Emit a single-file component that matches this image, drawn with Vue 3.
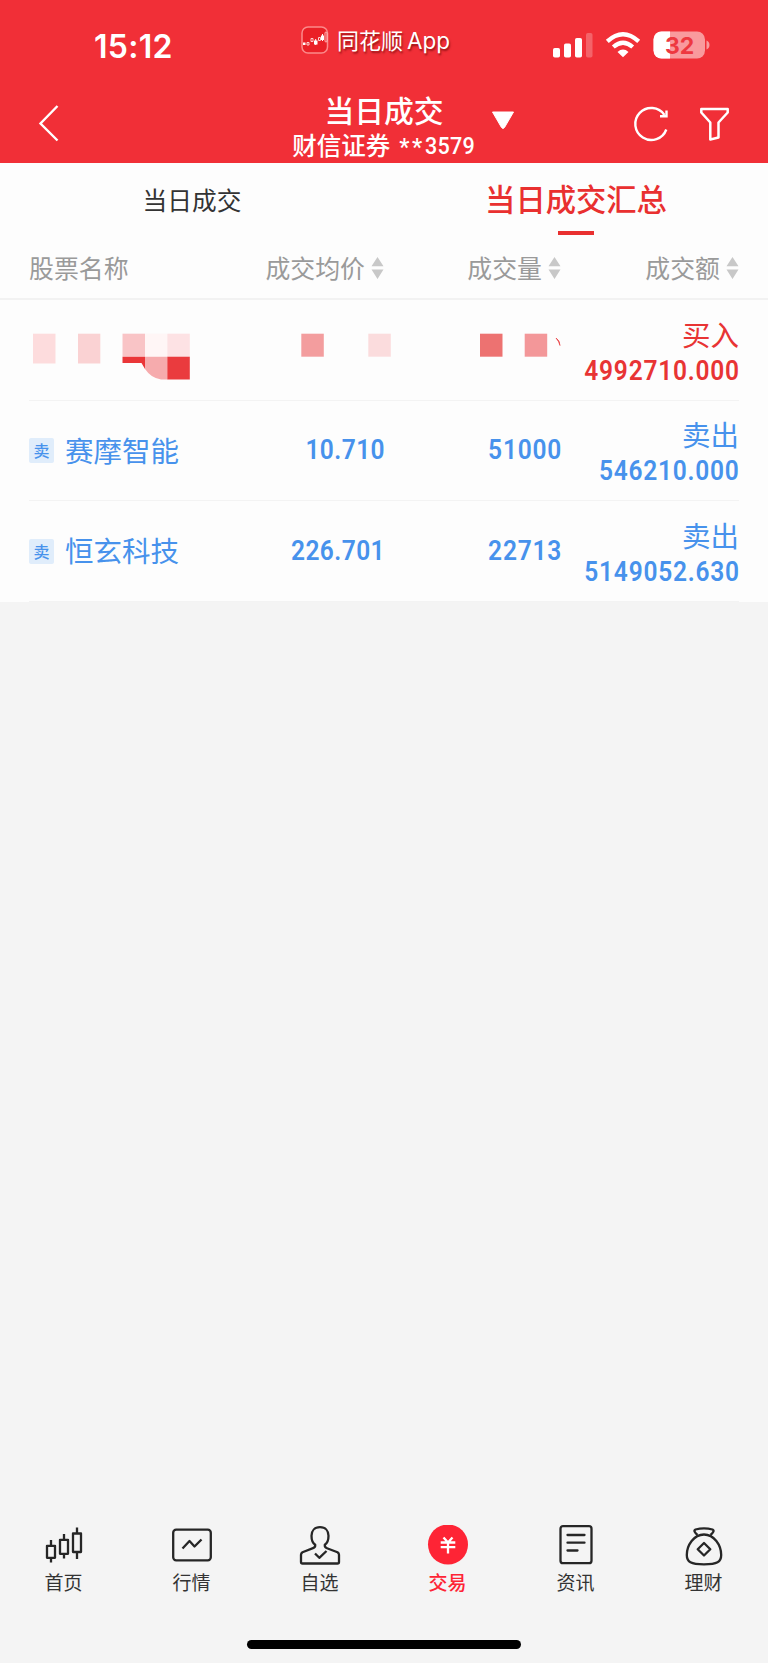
<script setup>
const columns = [
  { label: '股票名称', sortable: false },
  { label: '成交均价', sortable: true },
  { label: '成交量', sortable: true },
  { label: '成交额', sortable: true },
]
const rows = [
  { masked: true, side: 'buy', type: '买入', amount: '4992710.000' },
  { side: 'sell', tag: '卖', name: '赛摩智能', price: '10.710', volume: '51000', type: '卖出', amount: '546210.000' },
  { side: 'sell', tag: '卖', name: '恒玄科技', price: '226.701', volume: '22713', type: '卖出', amount: '5149052.630' },
]
const nav = [
  { id: 'home', label: '首页' },
  { id: 'market', label: '行情' },
  { id: 'watch', label: '自选' },
  { id: 'trade', label: '交易' },
  { id: 'news', label: '资讯' },
  { id: 'wealth', label: '理财' },
]
</script>

<template>
  <div class="screen">
    <header class="top">
      <div class="status">
        <span class="clock">15:12</span>
        <div class="brand">
          <svg class="brand-icon" width="28" height="28" viewBox="0 0 28 28">
            <rect x="1" y="1" width="25.500" height="26" rx="6" fill="#ea2027" stroke="#fb8a8b" stroke-width="1.500" />
            <path d="M6 16.500h2v2.500H6zM10 12.500h2v3h-2zM17.500 11.500h2v3h-2z" stroke="#fbd0d0" stroke-width="1" fill="none" />
            <path d="M2 16.500h2.500v2.500H2zM13 14.500h3.500v4H13zM20 9.500h3v4.500h-3z" fill="#fff" />
            <path d="M14.700 13v6M21.500 8v7" stroke="#fff" stroke-width="1" />
            <rect x="24" y="6" width="2" height="10" rx="1" fill="none" stroke="#fbb" stroke-width="1" />
          </svg>
          <span class="brand-name">同花顺<i class="latin">App</i></span>
        </div>
        <svg class="signals" width="160" height="30" viewBox="0 0 160 30">
          <g fill="#fff">
            <rect x="1" y="17" width="7" height="9.500" rx="1.800" />
            <rect x="12" y="12.500" width="7" height="14" rx="1.800" />
            <rect x="23" y="7" width="7" height="19.500" rx="1.800" />
            <rect x="34" y="2" width="6.500" height="24.500" rx="1.800" opacity=".25" />
          </g>
          <g transform="translate(54 1)" fill="none" stroke="#fff" stroke-width="4.300">
            <path d="M1.300 9.300Q17 -5 32.700 9.300" />
            <path d="M7.300 15Q17 6.500 26.700 15" />
            <path d="M11.500 19.900Q17 15 22.500 19.900L17 25.200Z" fill="#fff" stroke="none" />
          </g>
          <rect x="101.500" y="0.500" width="51.500" height="27" rx="8" fill="#f99a9d" />
          <path d="M118 .5V27.500H109.500a8 8 0 0 1-8-8V8.500a8 8 0 0 1 8-8z" fill="#fff" />
          <path d="M154.500 9.500q3 1.200 3 4.500t-3 4.500z" fill="#f99a9d" />
          <text x="127.700" y="22.500" text-anchor="middle" class="battery">32</text>
        </svg>
      </div>
      <div class="titlebar">
        <svg class="back" width="24" height="40" viewBox="0 0 24 40">
          <path d="M20.500 3L3.500 20.500l17 17" fill="none" stroke="#fff" stroke-width="2.400" />
        </svg>
        <div class="heading">
          <div class="title">当日成交</div>
          <div class="account">财信证券<span class="stars">**</span><span class="digits">3579</span></div>
        </div>
        <svg class="caret" width="24" height="20" viewBox="0 0 24 20">
          <path d="M1.500 2h21L13.500 17.500q-1.500 2-3 0z" fill="#fff" stroke="#fff" stroke-linejoin="round" />
        </svg>
        <svg class="actions" width="100" height="40" viewBox="0 0 100 40">
          <path d="M33.300 25.500A16 16 0 1 1 31.500 11" fill="none" stroke="#fff" stroke-width="2.400" />
          <path d="M33.500 6.500V12.200H27" fill="none" stroke="#fff" stroke-width="2.400" />
          <path d="M68.300 5H94.700V8.500L85.500 18.500V33.500L77.300 35.500V18.500L68.300 8.500Z" fill="none" stroke="#fff" stroke-width="2.500" stroke-linejoin="round" />
        </svg>
      </div>
    </header>

    <main class="sheet">
      <div class="tabs">
        <div class="tab">当日成交</div>
        <div class="tab active"><span>当日成交汇总</span></div>
      </div>
      <div class="grid head">
        <div v-for="c in columns" :key="c.label" class="cell">
          <span>{{ c.label }}</span>
          <svg v-if="c.sortable" class="sort" width="13" height="24" viewBox="0 0 13 24">
            <path d="M6.500 1L12.500 10.200H.5zM.5 13.500h12L6.500 23z" fill="#c8c8c8" />
          </svg>
        </div>
      </div>
      <div v-for="(r, i) in rows" :key="i" class="grid row" :class="r.side">
        <svg v-if="r.masked" class="mask" width="540" height="54" viewBox="29 330 540 54">
          <path d="M33 333.700h22.500V363.500H33z" fill="#fddcdd" />
          <path d="M78 333.700h22.300V363.500H78z" fill="#fad2d3" />
          <path d="M122.500 333.700H145v23h-22.500z" fill="#f9c4c6" />
          <path d="M145 333.700h22.300v23H145z" fill="#fff6f6" />
          <path d="M167.300 333.700h22.500v23h-22.500z" fill="#fde2e4" />
          <path d="M122.500 356.700H145V369L141.500 363H122.500z" fill="#ea3638" />
          <path d="M145 356.700h22.300V379.500H161Q151 378 145 369z" fill="#f6abad" />
          <path d="M167.300 356.700h22.500v22.800h-22.500z" fill="#ea3b3e" />
          <path d="M301.300 333.700h22.500v23h-22.500z" fill="#f39d9e" />
          <path d="M368.300 333.700h22.500v23h-22.500z" fill="#fbdcdd" />
          <path d="M480 333.700h22.500v23H480z" fill="#ed7271" />
          <path d="M524.700 333.700h22.500v23h-22.500z" fill="#f39799" />
          <path d="M556 338Q560 340.500 560 345.500 559 341.500 556 338z" fill="#e8383a" stroke="#e8383a" stroke-width=".6" />
        </svg>
        <template v-else>
          <div class="cell name"><span class="tag">{{ r.tag }}</span><span class="stock">{{ r.name }}</span></div>
          <div class="cell num price">{{ r.price }}</div>
          <div class="cell num">{{ r.volume }}</div>
        </template>
        <div class="cell total">
          <span class="type">{{ r.type }}</span>
          <span class="num">{{ r.amount }}</span>
        </div>
      </div>
    </main>

    <footer class="bottom">
      <nav class="nav">
        <div v-for="n in nav" :key="n.id" class="item" :class="{ on: n.id === 'trade' }">
          <svg width="44" height="44" viewBox="0 0 44 44" fill="none" stroke="#262626" stroke-width="2.300" stroke-linejoin="round">
            <g v-if="n.id === 'home'">
              <path d="M5 20.800h8v12H5zM18 14.800h8v14h-8zM31 8.500h8V27h-8z" />
              <path d="M9 15v6M9 33v4.500M22 9v6M22 29v4.500M35 2.500v6M35 27v7" />
            </g>
            <g v-else-if="n.id === 'market'">
              <rect x="3.200" y="4.700" width="37.600" height="30.600" rx="3" />
              <path d="M12.500 23.500L19.500 16 24.500 21.500 31.500 14.500" />
            </g>
            <g v-else-if="n.id === 'watch'">
              <path d="M22 2.200c-5.500 0-8.500 3.800-8.500 8.500 0 4.500 1 7.300 3.700 9.100.3 2-.6 2.800-2.200 3.400L4.500 27.200Q3 28.200 3 29.700v7.300q0 1.500 1.500 1.500h35q1.500 0 1.500-1.500V29.700q0-1.500-1.500-2.500L29 23.200c-1.600-.6-2.500-1.400-2.200-3.400 2.700-1.800 3.700-4.600 3.700-9.100C30.500 6 27.500 2.200 22 2.200z" />
              <path d="M17 28.500l4.300 4.300L28.500 26" />
            </g>
            <g v-else-if="n.id === 'trade'">
              <circle cx="22" cy="19.500" r="20" fill="#fe2435" stroke="none" />
              <path d="M17.500 12.500l4.500 5 4.500-5M14.700 17.500h14.600M14.700 22.200h14.600M22 17v11.500" stroke="#fff" />
            </g>
            <g v-else-if="n.id === 'news'">
              <rect x="6.500" y="1.200" width="31" height="37" rx="2.500" />
              <path d="M13.500 10h17M13.500 17.700h17M13.500 25.500h10" stroke-linecap="round" />
            </g>
            <g v-else>
              <path d="M15.500 10C12.500 7.500 11.500 5.500 13.500 4.500Q22 2.300 30.500 4.500C32.500 5.500 31.500 7.500 28.500 10" />
              <path d="M22 9.500C12 9.500 4.800 20 4.800 30c0 7 4 9.300 17.200 9.300s17.200-2.300 17.200-9.300C39.200 20 32 9.500 22 9.500z" />
              <path d="M22 18l6.300 6.300L22 30.500l-6.300-6.200z" />
            </g>
          </svg>
          <span>{{ n.label }}</span>
        </div>
      </nav>
      <div class="home-bar"></div>
    </footer>
  </div>
</template>

<style>
body { margin: 0; background: #f4f4f4; }
</style>

<style scoped>
.screen {
  width: 768px;
  height: 1663px;
  display: flex;
  flex-direction: column;
  background: #f4f4f4;
  font-family: "Noto Sans CJK SC", sans-serif;
  overflow: hidden;
}
svg { display: block; flex: none; }
.top { height: 163px; background: #f12f37; color: #fff; flex: none; }
.status { height: 88px; display: flex; align-items: flex-start; }
.clock {
  flex: none;
  width: 205px;
  padding: 28px 0 0 94px;
  font: 600 32px/38px Inter, sans-serif;
  letter-spacing: 0.300px;
}
.brand { display: flex; width: 253px; padding-top: 26px; }
.brand-icon { margin: 0 8px 0 2px; }
.brand-name {
  font-size: 22px;
  line-height: 27px;
  white-space: nowrap;
  text-shadow: 1px 2px 2px rgba(90, 0, 0, .6);
}
.latin { font: normal 22.500px/27px Inter, sans-serif; margin-left: 4px; }
.signals { margin-top: 31px; overflow: visible; }
.battery { font: 700 23px Inter, sans-serif; fill: #ee3840; }
.titlebar { height: 75px; display: flex; align-items: flex-start; }
.back { margin: 15px 0 0 37px; }
.heading { width: 188px; margin-left: 229px; text-align: center; white-space: nowrap; }
.title { font-size: 29.800px; font-weight: 500; line-height: 42px; height: 43px; }
.account { display: flex; justify-content: center; font-size: 24.500px; line-height: 28px; font-weight: 500; margin-left: -1px; }
.stars { font: 500 23px/28px Roboto, sans-serif; letter-spacing: 2.500px; margin: 3px 0 -3px 9px; }
.digits {
  width: 50px;
  text-align: left;
  font: 500 24.500px/30px Roboto, sans-serif;
  letter-spacing: 0.300px;
  transform: scaleX(.88);
  transform-origin: left center;
}
.caret { margin: 22px 0 0 13px; }
.actions { margin: 16px 0 0 118px; }

.sheet { background: #fdfdfd; height: 439px; flex: none; }
.tabs { display: flex; height: 73px; }
.tab {
  flex: 1;
  display: flex;
  flex-direction: column;
  align-items: center;
  font-size: 24.700px;
  line-height: 73px;
  color: #333;
}
.tab.active { font-size: 30.300px; font-weight: 500; color: #e93030; line-height: 70px; }
.tab.active span { height: 68px; }
.tab.active::after { content: ""; width: 36px; height: 4px; background: #e93030; }
.grid {
  display: grid;
  grid-template-columns: 175px 180px 177px 178px;
  padding: 0 29px;
  align-items: center;
}
.cell { display: flex; justify-content: flex-end; align-items: center; white-space: nowrap; }
.cell:first-child { justify-content: flex-start; }
.head { height: 62px; border-bottom: 2px solid #f2f2f2; font-size: 24.900px; line-height: 62px; color: #9a9a9a; }
.sort { margin: 2px 0 0 6px; }
.row { height: 100.600px; position: relative; }
.row::after {
  content: "";
  position: absolute;
  left: 29px;
  right: 29px;
  bottom: 0;
  height: 1px;
  background: #f3f3f3;
}
.buy { color: #e83434; }
.sell { color: #4792ec; }
.mask { grid-column: 1 / 4; margin-top: 14px; }
.name { font-size: 28.500px; }
.stock { margin-top: -3px; }
.tag {
  width: 25px;
  height: 25px;
  margin-right: 11px;
  background: #e0edfb;
  border-radius: 2px;
  font-size: 16px;
  font-weight: 500;
  line-height: 25px;
  text-align: center;
}
.num {
  font: 600 28.500px/34px Roboto, sans-serif;
  letter-spacing: 0.900px;
  margin-right: -1px;
  transform: scaleX(.86);
  transform-origin: right center;
}
.price { letter-spacing: 0.500px; }
.cell.num { margin-top: -1px; }
.cell.total { flex-direction: column; align-items: flex-end; justify-content: center; }
.type { font-size: 28.500px; line-height: 36px; margin: -2px 0 2px; }
.total .num { margin-bottom: -5px; }

.bottom { margin-top: auto; height: 138px; display: flex; flex-direction: column; align-items: center; }
.nav { display: flex; width: 768px; height: 115px; }
.item {
  flex: 1;
  display: flex;
  flex-direction: column;
  align-items: center;
  font-size: 19px;
  line-height: 28px;
  color: #333;
}
.item span { margin: -1px 1px 0 0; }
.item.on { color: #fe2435; font-weight: 500; }
.home-bar { width: 274px; height: 9px; border-radius: 5px; background: #000; }
</style>
